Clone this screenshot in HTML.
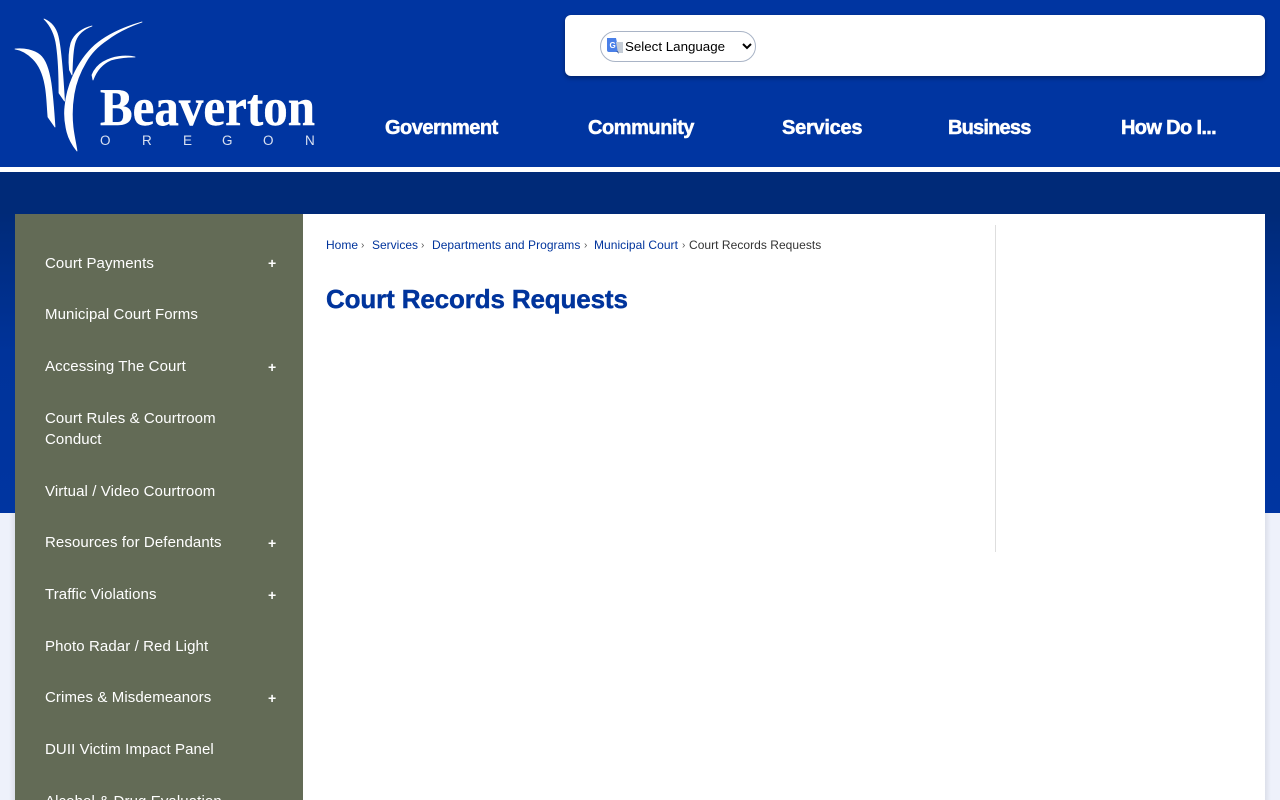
<!DOCTYPE html>
<html lang="en">
<head>
<meta charset="utf-8">
<title>Court Records Requests</title>
<style>
html,body{margin:0;padding:0;width:1280px;height:800px;overflow:hidden;background:#eef1fb;font-family:"Liberation Sans",Arial,sans-serif}
.abs{position:absolute}
#hdr{position:absolute;left:0;top:0;width:1280px;height:167px;background:#0035a1}
#stripe{position:absolute;left:0;top:167px;width:1280px;height:5px;background:#fff}
#band{position:absolute;left:0;top:172px;width:1280px;height:341px;background:linear-gradient(#002a78 0,#002a78 40px,#00339a 180px,#0035a1 341px)}
#shadL{position:absolute;left:0;top:513px;width:15px;height:287px;background:linear-gradient(90deg,#eef1fb 0,#eef1fb 9px,#dde0ea 15px)}
#shadR{position:absolute;left:1265px;top:513px;width:15px;height:287px;background:linear-gradient(270deg,#eef1fb 0,#eef1fb 9px,#dde0ea 15px)}
#topbox{position:absolute;left:565px;top:15px;width:700px;height:61px;background:#fff;border-radius:6px;box-shadow:0 2px 5px rgba(0,0,0,.35)}
select{position:absolute;left:600px;top:31px;width:156px;height:31px;border:1px solid #a9b4c6;border-radius:16px;background:#fff;padding:0 0 0 20px;font:13.33px "Liberation Sans",Arial,sans-serif;color:#000;margin:0;box-sizing:border-box}
.nav{position:absolute;top:116px;font-weight:bold;font-size:20px;line-height:24px;color:#fff;white-space:nowrap;-webkit-text-stroke:.5px #fff}
#main{position:absolute;left:303px;top:214px;width:962px;height:586px;background:#fff}
#side{position:absolute;left:15px;top:214px;width:288px;height:586px;background:#636b56;overflow:hidden}
.s{position:absolute;left:30px;width:190px;font-size:15px;line-height:21px;color:#fff;letter-spacing:.1px;margin-top:1px}
.p{position:absolute;left:253px;font-size:14px;line-height:16px;font-weight:bold;color:#fff}
#vline{position:absolute;left:995px;top:225px;width:1px;height:327px;background:#dedede}
#crumb{position:absolute;left:326px;top:238px;font-size:12px;line-height:14px;color:#333;white-space:nowrap}
#crumb span{position:absolute;top:0;white-space:nowrap}
#crumb .l{color:#00349c}
#crumb .g{color:#555;font-size:10px;top:1px}
h1{position:absolute;left:326px;top:283px;margin:0;font-size:26px;line-height:32px;font-weight:bold;color:#00349c;white-space:nowrap;letter-spacing:-.14px;-webkit-text-stroke:.45px #00349c}
</style>
</head>
<body>
<div id="hdr"></div>
<div id="stripe"></div>
<div id="band"></div>
<div id="shadL"></div>
<div id="shadR"></div>

<svg class="abs" style="left:0;top:0" width="340" height="167" viewBox="0 0 340 167">
<g fill="#fff" stroke="#fff" stroke-width=".8" stroke-linejoin="round">
<path d="M44 19C51 22 56 28 58 36C61 48 63 75 64.500 101L59 93C59 75 58.500 60 56.500 46C55 34 50 25 44 19Z"/>
<path d="M15 49C24 48 34 50 40 55C46 60 49 70 51 83C53 97 54 112 55 127L48 117C47 106 47 95 45 85C43 74 39 65 33 59C28 54 22 50 15 49Z"/>
<path d="M92 26C84 29 78 34 75.500 41C73 48 72.500 60 72 75L69.500 70C68.500 60 69 50 71 43C74 34 83 28 92 26Z"/>
<path d="M142 22C128 27 116 33 107 40C98 46 91 53 86 62C80 72 76 82 74 94C72 106 72 118 73 127C74 136 76 144 77 151C73 146 69 140 67 132C65 124 64 114 65 106C66 95 69 85 73 76C78 65 85 54 95 45C108 34 124 27 142 22Z"/>
<path d="M135 57C126 57 118 58 111 60C104 63 97 69 93 80L92 75C94 70 98 65 103 62C113 56 125 55 135 57Z"/>
</g>
<text x="100" y="125" font-family="'Liberation Serif',serif" font-weight="bold" font-size="53" fill="#fff" stroke="#fff" stroke-width=".4" textLength="215" lengthAdjust="spacingAndGlyphs">Beaverton</text>
<g font-family="'Liberation Sans',sans-serif" font-size="13.500" fill="#fff" fill-opacity=".85">
<text x="100" y="145">O</text>
<text x="142" y="145">R</text>
<text x="183" y="145">E</text>
<text x="222" y="145">G</text>
<text x="263" y="145">O</text>
<text x="305" y="145">N</text>
</g>
</svg>

<div id="topbox"></div>
<select><option>Select Language</option></select>
<svg class="abs" style="left:606px;top:37px" width="17" height="18" viewBox="0 0 17 18">
<path d="M1 1H10L13 15H3A2 2 0 0 1 1 13Z" fill="#4a80e8"/>
<path d="M10 5H17V16H12Z" fill="#c4ccd6"/>
<path d="M10 14L13 17L12 14Z" fill="#3c5fa8"/>
<text x="3.500" y="11" font-family="'Liberation Sans',sans-serif" font-size="8" font-weight="bold" fill="#fff">G</text>
</svg>

<div class="nav" style="left:385px;letter-spacing:-.5px">Government</div>
<div class="nav" style="left:588px;letter-spacing:-.45px">Community</div>
<div class="nav" style="left:782px;letter-spacing:-.25px">Services</div>
<div class="nav" style="left:948px;letter-spacing:-.8px">Business</div>
<div class="nav" style="left:1121px;letter-spacing:-.65px">How Do I...</div>

<div id="main"></div>
<div id="vline"></div>
<div id="side">
<div class="s" style="top:38px">Court Payments</div><div class="p" style="top:41px">+</div>
<div class="s" style="top:89px">Municipal Court Forms</div>
<div class="s" style="top:141px">Accessing The Court</div><div class="p" style="top:145px">+</div>
<div class="s" style="top:193px">Court Rules &amp; Courtroom Conduct</div>
<div class="s" style="top:266px">Virtual / Video Courtroom</div>
<div class="s" style="top:317px">Resources for Defendants</div><div class="p" style="top:321px">+</div>
<div class="s" style="top:369px">Traffic Violations</div><div class="p" style="top:373px">+</div>
<div class="s" style="top:421px">Photo Radar / Red Light</div>
<div class="s" style="top:472px">Crimes &amp; Misdemeanors</div><div class="p" style="top:476px">+</div>
<div class="s" style="top:524px">DUII Victim Impact Panel</div>
<div class="s" style="top:576px;width:220px">Alcohol &amp; Drug Evaluation</div>
</div>

<div id="crumb">
<span class="l" style="left:0">Home</span><span class="g" style="left:35px">›</span>
<span class="l" style="left:46px">Services</span><span class="g" style="left:95px">›</span>
<span class="l" style="left:106px;letter-spacing:.04px">Departments and Programs</span><span class="g" style="left:258px">›</span>
<span class="l" style="left:268px;letter-spacing:.04px">Municipal Court</span><span class="g" style="left:356px">›</span>
<span style="left:363px;letter-spacing:.04px">Court Records Requests</span>
</div>
<h1>Court Records Requests</h1>
</body>
</html>
